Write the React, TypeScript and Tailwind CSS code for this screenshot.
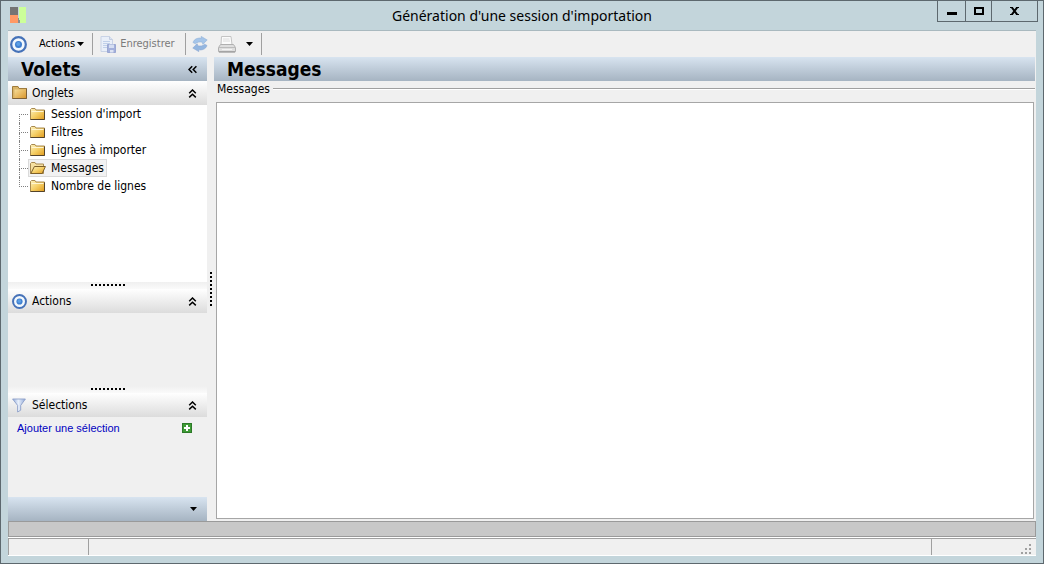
import { useState, type ReactNode } from "react";

const TABS = ["Session d'import", "Filtres", "Lignes à importer", "Messages", "Nombre de lignes"];

function AppLogo() {
  return (
    <svg width="16" height="16" viewBox="0 0 16 16" aria-hidden="true" shapeRendering="crispEdges">
      <rect width="8" height="8" fill="#747474" />
      <rect y="8" width="8" height="8" fill="#ff9966" />
      <rect x="9" width="7" height="16" fill="#ccff99" />
      <rect x="8" y="11" width="1" height="5" fill="#8d8d8d" />
      <rect x="9" y="13" width="1" height="3" fill="#8d8d8d" />
    </svg>
  );
}

function TargetIcon({ size }: { size: number }) {
  return (
    <svg width={size} height={size} viewBox="0 0 16 16" aria-hidden="true">
      <circle cx="8" cy="8" r="6.9" fill="#f2f8fd" stroke="#4672b8" strokeWidth="2.1" />
      <circle cx="8" cy="8" r="3.3" fill="#3f7fd0" />
      <circle cx="7.8" cy="7.6" r="1.9" fill="#5c9fe4" />
    </svg>
  );
}

function FolderIcon({ open = false }: { open?: boolean }) {
  return (
    <svg width="16" height="14" viewBox="0 0 16 14" aria-hidden="true">
      <defs>
        <linearGradient id="folderFill" x1="0" y1="0" x2="1" y2="1">
          <stop offset="0" stopColor="#fdf2c0" />
          <stop offset="0.5" stopColor="#f5cf66" />
          <stop offset="1" stopColor="#e09a1c" />
        </linearGradient>
      </defs>
      {open ? (
        <>
          <path d="M.5 12.5V2.5l1-1H5l1 1.5h7.5v9.5z" fill="#f6e0a0" stroke="#a88a50" />
          <path d="M.8 12.5 4.4 5.5h11l-3.2 7z" fill="url(#folderFill)" stroke="#7d5f28" />
        </>
      ) : (
        <>
          <path d="M.5 12.5V2.5l1-1H5l1 1.5h8.5v9.5z" fill="url(#folderFill)" stroke="#a88a50" />
          <path d="M1.5 4.5h12" stroke="#fff6d2" />
          <path d="M.5 12.5h14V3.5" fill="none" stroke="#54432a" />
        </>
      )}
    </svg>
  );
}

function FolderHeaderIcon() {
  return (
    <svg width="15" height="14" viewBox="0 0 15 14" aria-hidden="true">
      <defs>
        <linearGradient id="folderFront" x1="0" y1="0" x2="1" y2="1">
          <stop offset="0" stopColor="#f6dc96" />
          <stop offset="1" stopColor="#d9962c" />
        </linearGradient>
      </defs>
      <path d="M.5 12.5v-12H6l1 2h7.500v10z" fill="#d9b468" stroke="#a07c3c" />
      <path d="M2.500 3.500h11.500v9H2.500z" fill="url(#folderFront)" />
      <path d="M.5 12.500h14v-10" fill="none" stroke="#7c6038" />
    </svg>
  );
}

function FilterIcon() {
  return (
    <svg width="14" height="15" viewBox="0 0 14 15" aria-hidden="true">
      <defs>
        <linearGradient id="funnelFill">
          <stop offset="0" stopColor="#8fa9dc" />
          <stop offset="0.45" stopColor="#eaf1fb" />
          <stop offset="1" stopColor="#8ea7d8" />
        </linearGradient>
      </defs>
      <path d="M.6 1h12.8L8.7 7.4v4.8L5.6 14V7.4z" fill="url(#funnelFill)" stroke="#8c9fc8" strokeWidth=".9" />
    </svg>
  );
}

function SaveIcon() {
  return (
    <svg width="16" height="17" viewBox="0 0 16 17" aria-hidden="true">
      <path d="M1 .5h8.500l3 3v12H1z" fill="#e9eff9" stroke="#c9d3e6" />
      <path d="M9.500.5v3h3" fill="#dbe4f3" stroke="#c3cde0" />
      <path d="M3 5.500h7M3 7.500h7M3 9.500h4M3 11.500h4" stroke="#c0d0ea" />
      <path d="M7.500 8.500h8v8h-8z" fill="#a3b0dc" stroke="#9aa7d2" />
      <path d="M9 8.500h5V12H9z" fill="#d5def2" />
      <path d="M10 14h3.500v2.500H10z" fill="#dde3f3" />
    </svg>
  );
}

function RefreshIcon() {
  return (
    <svg width="16" height="16" viewBox="0 0 16 16" aria-hidden="true">
      <path d="M1 6.500C2 3 6 1.600 9.500 2.200L9.200.4l6 3.600-4.400 4.200-.5-2C7.500 5.600 5 6 3.500 7.800z" fill="#a5c5e9" stroke="#8fb0d9" strokeWidth=".6" />
      <path d="M15 9.500c-1 3.500-5 4.900-8.500 4.300l.3 1.800-6-3.600 4.400-4.200.5 2c2.800.6 5.300.2 6.800-1.600z" fill="#93b6e0" stroke="#86a5d2" strokeWidth=".6" />
    </svg>
  );
}

function PrinterIcon() {
  return (
    <svg width="18" height="17" viewBox="0 0 18 17" aria-hidden="true">
      <path d="M3.500.5h9.500l1 8h-11z" fill="#fbfbfb" stroke="#c4c4c4" />
      <path d="M5 3h6.500M5 5h7" stroke="#dcdcdc" />
      <path d="M2.500 8.500h13l2 3v4.200H.5v-4.200z" fill="#dedede" stroke="#b0b0b0" />
      <path d="M1 11.500h16" stroke="#bcbcbc" />
      <path d="M1 16h16" stroke="#8f8f8f" />
      <path d="M4 13.500h10" stroke="#f4f4f4" />
    </svg>
  );
}

function Caret() {
  return (
    <svg width="7" height="4" viewBox="0 0 7 4" aria-hidden="true">
      <path d="M0 0h7L3.500 4z" fill="#000" />
    </svg>
  );
}

function DoubleChevron({ direction }: { direction: "up" | "left" }) {
  return (
    <svg
      width="9"
      height="9"
      viewBox="0 0 9 9"
      fill="none"
      stroke="#000"
      strokeWidth="1.5"
      aria-hidden="true"
      className={direction === "left" ? "-rotate-90" : ""}
    >
      <path d="M1.200 4.200 4.500 1l3.300 3.200M1.200 8.400 4.500 5.200l3.300 3.200" />
    </svg>
  );
}

function Separator() {
  return <div className="h-[22px] w-px bg-[#a0a0a0]" />;
}

function SectionHeader({ icon, title }: { icon: ReactNode; title: string }) {
  return (
    <div className="flex h-6 shrink-0 items-center bg-linear-to-b from-white to-[#dcdcdc] pr-2.5 pl-1">
      <span className="flex w-5 items-center">{icon}</span>
      <h3 className="flex-1">{title}</h3>
      <button type="button" aria-label={`Réduire ${title}`} className="p-0.5 pr-0">
        <DoubleChevron direction="up" />
      </button>
    </div>
  );
}

function RowGrip() {
  return (
    <div className="flex h-[7px] shrink-0 items-start justify-center gap-0.5 bg-linear-to-b from-[#f0f0f0] to-[#fafafa] pt-0.5">
      {Array.from({ length: 9 }, (_, i) => (
        <span key={i} className="size-0.5 bg-black" />
      ))}
    </div>
  );
}

function ResizeGrip() {
  return (
    <svg width="10" height="10" viewBox="0 0 10 10" fill="#a0a0a0" aria-hidden="true">
      <path d="M8 0h2v2H8zM4 4h2v2H4zM8 4h2v2H8zM0 8h2v2H0zM4 8h2v2H4zM8 8h2v2H8z" />
    </svg>
  );
}

export default function App() {
  const [tab, setTab] = useState("Messages");
  const [text, setText] = useState("");

  return (
    <div className="flex min-h-screen flex-col border border-[#5d686e] bg-[#c3d5db] px-[7px] pb-[7px] font-['DejaVu_Sans_Condensed','Noto_Sans',sans-serif] text-[12px] leading-4 text-black">
      <header className="grid h-[29px] shrink-0 grid-cols-[1fr_auto_1fr] items-start">
        <div className="pt-1.5 pl-0.5">
          <AppLogo />
        </div>
        <h1 className="pt-1 font-['Noto_Sans',sans-serif] text-[14px] leading-[22px]">Génération d'une session d'importation</h1>
        <div className="mr-[-2px] flex h-[21px] justify-self-end divide-x divide-[#5d686e] border border-t-0 border-[#5d686e]">
          <button type="button" aria-label="Réduire" className="flex w-7 items-center justify-center">
            <svg width="10" height="10" viewBox="0 0 10 10" aria-hidden="true">
              <path d="M0 6h10v3H0z" />
            </svg>
          </button>
          <button type="button" aria-label="Agrandir" className="flex w-[26px] items-center justify-center">
            <svg width="10" height="8" viewBox="0 0 10 8" fill="none" stroke="#000" strokeWidth="2" aria-hidden="true">
              <path d="M1 1h8v6H1z" />
            </svg>
          </button>
          <button type="button" aria-label="Fermer" className="flex w-[45px] items-center justify-center">
            <svg width="9" height="8" viewBox="0 0 9 8" stroke="#000" strokeWidth="2" aria-hidden="true">
              <path d="M1.500 0l6 8M7.500 0l-6 8" />
              <path d="M0 .5h3M6 .5h3M0 7.500h3M6 7.500h3" strokeWidth="1" />
            </svg>
          </button>
        </div>
      </header>

      <div className="flex flex-1 flex-col border-t border-[#a9b9bf] bg-[#f0f0f0]">
        <div role="toolbar" aria-label="Outils" className="flex h-[26px] shrink-0 items-center text-[11px]">
          <button type="button" className="flex items-center gap-0.5 pr-2 pl-0.5">
            <span className="mr-2.5">
              <TargetIcon size={17} />
            </span>
            Actions
            <Caret />
          </button>
          <Separator />
          <button type="button" disabled className="flex items-center gap-1 pr-2.5 pl-[7px] text-[#7a7a7a]">
            <SaveIcon />
            Enregistrer
          </button>
          <Separator />
          <button type="button" aria-label="Actualiser" className="pl-1.5">
            <RefreshIcon />
          </button>
          <button type="button" aria-label="Imprimer" className="pl-2.5">
            <PrinterIcon />
          </button>
          <button type="button" aria-label="Options d'impression" className="px-2 pl-2.5">
            <Caret />
          </button>
          <Separator />
        </div>

        <div className="flex flex-1">
          <aside className="flex w-[199px] shrink-0 flex-col">
            <div className="flex h-6 shrink-0 items-center justify-between bg-linear-to-b from-[#d8e4f0] to-[#a6b4c2] pr-2.5 pl-[13px]">
              <h2 className="text-[19px] leading-6 font-bold">Volets</h2>
              <button type="button" aria-label="Masquer les volets">
                <DoubleChevron direction="left" />
              </button>
            </div>

            <SectionHeader icon={<FolderHeaderIcon />} title="Onglets" />
            <div className="h-[177px] shrink-0 bg-white pl-[11px]">
              <ul>
                {TABS.map((name, i) => (
                  <li key={name} className="flex h-[18px] items-center">
                    <span className="flex h-full w-[9px] flex-col">
                      <span
                        className={
                          i === 0
                            ? "mt-[9px] h-[9px] border-t border-l border-dotted border-[#808080]"
                            : "h-[10px] border-b border-l border-dotted border-[#808080]"
                        }
                      />
                      {i > 0 && i < TABS.length - 1 && <span className="flex-1 border-l border-dotted border-[#808080]" />}
                    </span>
                    <button
                      type="button"
                      onClick={() => setTab(name)}
                      className={
                        name === tab
                          ? "flex h-[18px] items-center gap-[5px] border border-[#dadada] bg-[#f2f2f2] px-px pr-0.5"
                          : "flex h-[18px] items-center gap-[5px] border border-transparent px-px pr-0.5"
                      }
                    >
                      <FolderIcon open={name === tab} />
                      {name}
                    </button>
                  </li>
                ))}
              </ul>
            </div>

            <RowGrip />
            <SectionHeader icon={<TargetIcon size={15} />} title="Actions" />
            <div className="h-[73px] shrink-0" />

            <RowGrip />
            <SectionHeader icon={<FilterIcon />} title="Sélections" />
            <div className="flex flex-1 items-start justify-between pt-[3px] pr-[15px] pl-[9px]">
              <a href="#selection" className="font-['Liberation_Sans',sans-serif] text-[11px] text-[#0000c0]">
                Ajouter une sélection
              </a>
              <button type="button" aria-label="Ajouter" className="pt-[3px]">
                <svg width="10" height="10" viewBox="0 0 10 10" aria-hidden="true">
                  <rect x=".5" y=".5" width="9" height="9" fill="#3f9b36" stroke="#2c7a28" />
                  <path d="M4 2h2v2h2v2H6v2H4V6H2V4h2z" fill="#fff" />
                </svg>
              </button>
            </div>
            <div className="flex h-6 shrink-0 items-center justify-end bg-linear-to-b from-[#d8e4f0] to-[#a6b4c2] pr-2.5">
              <button type="button" aria-label="Autres volets" className="p-1 pr-0">
                <Caret />
              </button>
            </div>
          </aside>

          <div className="flex w-[7px] shrink-0 flex-col items-center justify-center gap-0.5">
            {Array.from({ length: 9 }, (_, i) => (
              <span key={i} className="size-0.5 bg-black" />
            ))}
          </div>

          <main className="flex min-w-0 flex-1 flex-col pr-px">
            <h2 className="h-6 shrink-0 bg-linear-to-b from-[#d8e4f0] to-[#a6b4c2] pl-[13px] text-[19px] leading-6 font-bold">
              Messages
            </h2>
            <div className="flex items-center gap-[3px] pl-[3px]">
              <label htmlFor="messages">Messages</label>
              <span className="h-0.5 flex-1 border-t border-b border-t-[#a0a0a0] border-b-white" />
            </div>
            <div className="flex flex-1 px-0.5 pt-[5px] pr-px pb-[2px]">
              <textarea
                id="messages"
                value={text}
                onChange={(e) => setText(e.target.value)}
                className="flex-1 resize-none border border-[#a6a6a6] bg-white p-1 outline-none"
              />
            </div>
          </main>
        </div>

        <div className="h-4 shrink-0 border border-[#9a9a9a] bg-[#c8c8c8]" />
        <footer className="flex h-[19px] shrink-0 border-t border-b border-white">
          <div className="w-[81px] border-t border-r border-l border-[#a0a0a0]" />
          <div className="flex-1 border-t border-[#a0a0a0]" />
          <div className="flex w-[105px] items-end justify-end border-t border-l border-[#a0a0a0] pr-[5px] pb-px">
            <ResizeGrip />
          </div>
        </footer>
      </div>
    </div>
  );
}
